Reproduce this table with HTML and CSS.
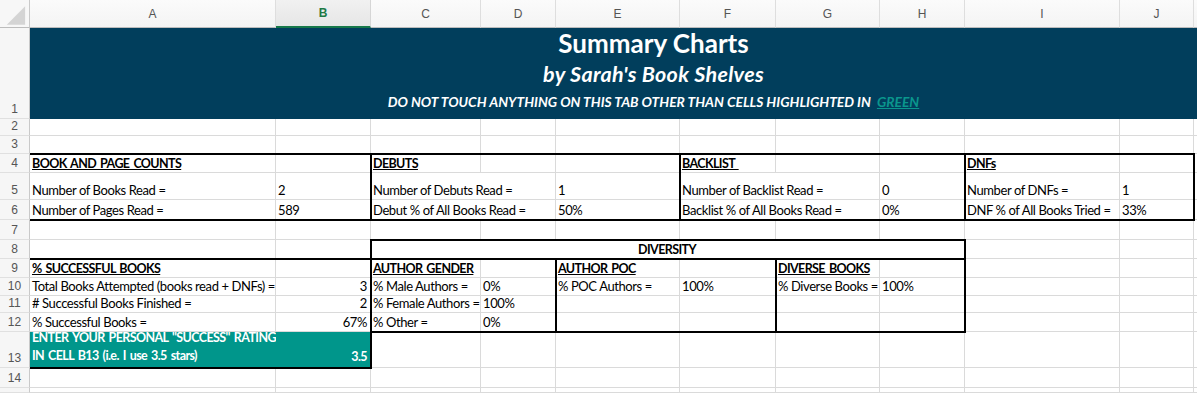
FILE: index.html
```html
<!DOCTYPE html>
<html lang="en">
<head>
<meta charset="utf-8">
<title>Summary Charts</title>
<link rel="stylesheet" href="styles.css">
</head>
<body>
<div class="sheet">
  <div class="grid cells">
    <!-- column headers -->
    <div class="corner"><svg width="30" height="28" viewBox="0 0 30 28"><polygon points="7,25 26,25 26,6" fill="#d4d4d4"/></svg></div>
    <div class="ch">A</div><div class="ch sel">B</div><div class="ch">C</div><div class="ch">D</div><div class="ch">E</div><div class="ch">F</div><div class="ch">G</div><div class="ch">H</div><div class="ch">I</div><div class="ch">J</div><div class="ch last"></div>

    <!-- row 1 -->
    <div class="rh">1</div>
    <div class="banner">
      <div class="banner-inner">
        <div class="t1">Summary Charts</div>
        <div class="t2">by Sarah's Book Shelves</div>
        <div class="t3">DO NOT TOUCH ANYTHING ON THIS TAB OTHER THAN CELLS HIGHLIGHTED IN&nbsp; <span class="green">GREEN</span></div>
      </div>
    </div>

    <!-- row 2 -->
    <div class="rh">2</div>
    <div class="c"></div><div class="c"></div><div class="c"></div><div class="c"></div><div class="c"></div><div class="c"></div><div class="c"></div><div class="c"></div><div class="c"></div><div class="c"></div><div class="c"></div>

    <!-- row 3 -->
    <div class="rh">3</div>
    <div class="c"></div><div class="c"></div><div class="c"></div><div class="c"></div><div class="c"></div><div class="c"></div><div class="c"></div><div class="c"></div><div class="c"></div><div class="c"></div><div class="c"></div>

    <!-- row 4 -->
    <div class="rh">4</div>
    <div class="c"><span class="h">BOOK AND PAGE COUNTS</span></div>
    <div class="c"></div>
    <div class="c"><span class="h">DEBUTS</span></div>
    <div class="c"></div>
    <div class="c"></div>
    <div class="c"><span class="h">BACKLIST&nbsp;</span></div>
    <div class="c"></div>
    <div class="c"></div>
    <div class="c"><span class="h">DNFs</span></div>
    <div class="c"></div>
    <div class="c"></div>

    <!-- row 5 -->
    <div class="rh">5</div>
    <div class="c">Number of Books Read =</div>
    <div class="c">2</div>
    <div class="c span2">Number of Debuts Read =</div>
    <div class="c">1</div>
    <div class="c span2">Number of Backlist Read =</div>
    <div class="c">0</div>
    <div class="c">Number of DNFs =</div>
    <div class="c">1</div>
    <div class="c"></div>

    <!-- row 6 -->
    <div class="rh">6</div>
    <div class="c">Number of Pages Read =</div>
    <div class="c">589</div>
    <div class="c span2">Debut % of All Books Read =</div>
    <div class="c">50%</div>
    <div class="c span2">Backlist % of All Books Read =</div>
    <div class="c">0%</div>
    <div class="c">DNF % of All Books Tried =</div>
    <div class="c">33%</div>
    <div class="c"></div>

    <!-- row 7 -->
    <div class="rh">7</div>
    <div class="c"></div><div class="c"></div><div class="c"></div><div class="c"></div><div class="c"></div><div class="c"></div><div class="c"></div><div class="c"></div><div class="c"></div><div class="c"></div><div class="c"></div>

    <!-- row 8 -->
    <div class="rh">8</div>
    <div class="c"></div>
    <div class="c"></div>
    <div class="c span6 center"><span class="b">DIVERSITY</span></div>
    <div class="c"></div>
    <div class="c"></div>
    <div class="c"></div>

    <!-- row 9 -->
    <div class="rh">9</div>
    <div class="c"><span class="h">% SUCCESSFUL BOOKS</span></div>
    <div class="c"></div>
    <div class="c"><span class="h">AUTHOR GENDER</span></div>
    <div class="c"></div>
    <div class="c"><span class="h">AUTHOR POC</span></div>
    <div class="c"></div>
    <div class="c"><span class="h">DIVERSE BOOKS</span></div>
    <div class="c"></div>
    <div class="c"></div>
    <div class="c"></div>
    <div class="c"></div>

    <!-- row 10 -->
    <div class="rh">10</div>
    <div class="c">Total Books Attempted (books read + DNFs) =</div>
    <div class="c right">3</div>
    <div class="c">% Male Authors =</div>
    <div class="c">0%</div>
    <div class="c">% POC Authors =</div>
    <div class="c">100%</div>
    <div class="c">% Diverse Books =</div>
    <div class="c">100%</div>
    <div class="c"></div>
    <div class="c"></div>
    <div class="c"></div>

    <!-- row 11 -->
    <div class="rh">11</div>
    <div class="c"># Successful Books Finished =</div>
    <div class="c right">2</div>
    <div class="c">% Female Authors =</div>
    <div class="c">100%</div>
    <div class="c"></div><div class="c"></div><div class="c"></div><div class="c"></div><div class="c"></div><div class="c"></div><div class="c"></div>

    <!-- row 12 -->
    <div class="rh">12</div>
    <div class="c">% Successful Books =</div>
    <div class="c right">67%</div>
    <div class="c">% Other =</div>
    <div class="c">0%</div>
    <div class="c"></div><div class="c"></div><div class="c"></div><div class="c"></div><div class="c"></div><div class="c"></div><div class="c"></div>

    <!-- row 13 -->
    <div class="rh">13</div>
    <div class="c teal wrap"><span class="b">ENTER YOUR PERSONAL "SUCCESS" RATING<br>IN CELL B13 (i.e. I use 3.5 stars)</span></div>
    <div class="c teal right"><span class="b">3.5</span></div>
    <div class="c"></div><div class="c"></div><div class="c"></div><div class="c"></div><div class="c"></div><div class="c"></div><div class="c"></div><div class="c"></div><div class="c"></div>

    <!-- row 14 -->
    <div class="rh">14</div>
    <div class="c"></div><div class="c"></div><div class="c"></div><div class="c"></div><div class="c"></div><div class="c"></div><div class="c"></div><div class="c"></div><div class="c"></div><div class="c"></div><div class="c"></div>

    <!-- row 15 -->
    <div class="rh"></div>
    <div class="c"></div><div class="c"></div><div class="c"></div><div class="c"></div><div class="c"></div><div class="c"></div><div class="c"></div><div class="c"></div><div class="c"></div><div class="c"></div><div class="c"></div>
  </div>

  <!-- thick border layer -->
  <div class="grid frames">
    <div class="box open-left b-counts"></div>
    <div class="box b-debuts"></div>
    <div class="box b-backlist"></div>
    <div class="box b-dnfs"></div>
    <div class="box b-diversity"></div>
    <div class="box b-gender"></div>
    <div class="box b-poc"></div>
    <div class="box b-diverse"></div>
    <div class="box open-left b-success"></div>
  </div>
</div>
</body>
</html>
```

FILE: styles.css
```css
html, body {
  margin: 0;
  padding: 0;
  background: #ffffff;
}

body {
  width: 1197px;
  height: 393px;
  overflow: hidden;
  font-family: "Lato", "Liberation Sans", sans-serif;
  color: #000;
}

.sheet {
  display: grid;
  width: 1197px;
  height: 393px;
  overflow: hidden;
}

.grid {
  grid-area: 1 / 1;
  display: grid;
  grid-template-columns: 30px 246px 95px 110px 75px 124px 96px 104px 85px 155px 74px 1fr;
  grid-template-rows: 28px 91px 17px 18px 19px 27px 20px 20px 19px 19px 18px 17px 19px 36px 20px 1fr;
}

.frames {
  pointer-events: none;
}

/* headers */
.corner {
  background: #f7f7f7;
  border-right: 1px solid #c9c9c9;
  border-bottom: 1px solid #bcbcbc;
  box-sizing: border-box;
  display: flex;
}

.corner svg {
  display: block;
}

.ch {
  background: linear-gradient(#fbfbfb, #f4f4f4);
  border-right: 1px solid #dedede;
  border-bottom: 1px solid #bcbcbc;
  box-sizing: border-box;
  display: flex;
  align-items: center;
  justify-content: center;
  font-family: "Liberation Sans", Arial, sans-serif;
  font-size: 12px;
  color: #555;
}

.ch.sel {
  background: linear-gradient(#f1f1f1, #e6e6e6);
  color: #1e7a45;
  font-weight: bold;
  border-bottom: 2px solid #16784a;
  border-right-color: #d6d6d6;
}

.ch.last {
  border-right: none;
}

.rh {
  background: #f6f6f6;
  border-right: 1px solid #c9c9c9;
  border-bottom: 1px solid #e0e0e0;
  box-sizing: border-box;
  display: flex;
  align-items: flex-end;
  justify-content: center;
  padding-bottom: 3px;
  font-family: "Liberation Sans", Arial, sans-serif;
  font-size: 12px;
  line-height: 12px;
  color: #555;
}

/* title banner */
.banner {
  grid-column: 2 / -1;
  background: #013e5c;
  display: flex;
  justify-content: center;
  padding-left: 77px;
  color: #fff;
  font-weight: bold;
}

.banner-inner {
  display: flex;
  flex-direction: column;
  align-items: center;
  padding-top: 0;
}

.t1 {
  font-size: 26px;
  line-height: 31px;
}

.t2 {
  font-size: 21.5px;
  font-style: italic;
  letter-spacing: 0.3px;
  line-height: 30px;
}

.t3 {
  font-size: 13.8px;
  font-style: italic;
  line-height: 25px;
  white-space: pre;
}

.green {
  color: #0a968d;
  text-decoration: underline;
}

/* cells */
.c {
  border-right: 1px solid #dadada;
  border-bottom: 1px solid #dadada;
  box-sizing: border-box;
  display: flex;
  align-items: flex-end;
  padding: 0 3px 0 2px;
  white-space: nowrap;
  font-size: 13px;
  letter-spacing: -0.4px;
  line-height: 17px;
  min-width: 0;
}

.span2 {
  grid-column: span 2;
}

.span6 {
  grid-column: span 6;
}

.center {
  justify-content: center;
}

.right {
  justify-content: flex-end;
}

.b,
.h {
  font-weight: bold;
  font-size: 12.5px;
  letter-spacing: -0.6px;
  word-spacing: 1.5px;
}

.h {
  text-decoration: underline;
}

.teal {
  background: #00968b;
  color: #fff;
  border-right-color: #00968b;
  border-bottom-color: #00968b;
  padding-bottom: 2px;
}

.wrap {
  line-height: 18px;
}

/* thick borders */
.box {
  border: 2px solid #000;
  margin: -1px;
}

.open-left {
  border-left: none;
  margin-left: 0;
}

.b-counts   { grid-row: 5 / 8;  grid-column: 2 / 4; }
.b-debuts   { grid-row: 5 / 8;  grid-column: 4 / 7; }
.b-backlist { grid-row: 5 / 8;  grid-column: 7 / 10; }
.b-dnfs     { grid-row: 5 / 8;  grid-column: 10 / 12; }
.b-diversity{ grid-row: 9 / 10; grid-column: 4 / 10; }
.b-gender   { grid-row: 10 / 14; grid-column: 4 / 6; }
.b-poc      { grid-row: 10 / 14; grid-column: 6 / 8; }
.b-diverse  { grid-row: 10 / 14; grid-column: 8 / 10; }
.b-success  { grid-row: 10 / 15; grid-column: 2 / 4; }
```
